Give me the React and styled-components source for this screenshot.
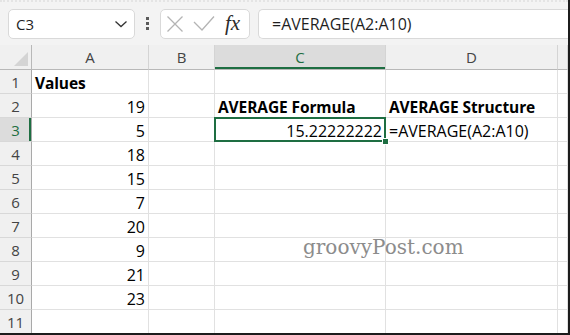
import React from "react";
import styled, { createGlobalStyle, css } from "styled-components";

const GREEN = "#1e6e42";

const GlobalStyle = createGlobalStyle`
  body {
    margin: 0;
    background: #fff;
    font-family: "Open Sans", "Liberation Sans", sans-serif;
  }
`;

const Frame = styled.div`
  position: relative;
  width: 570px;
  height: 335px;
  box-sizing: border-box;
  border-right: 2px solid #1c1c1c;
  border-bottom: 2px solid #1c1c1c;
  overflow: hidden;
  background: #fff;
`;

const Toolbar = styled.div`
  display: flex;
  align-items: center;
  height: 45px;
  box-sizing: border-box;
  padding: 0 0 0 8px;
  background: #f3f3f3;
  border-top: 2px dotted #e4e4e4;
`;

const NameBox = styled.div`
  display: flex;
  align-items: center;
  justify-content: space-between;
  width: 127px;
  height: 30px;
  box-sizing: border-box;
  padding: 0 6px 0 7px;
  background: #fff;
  border: 1px solid #d9d9d9;
  border-radius: 5px;
  font-size: 15px;
  color: #1f1f1f;
`;

const Dots = styled.div`
  display: flex;
  flex-direction: column;
  gap: 2px;
  margin: 0 11px 0 11px;
  span {
    width: 3px;
    height: 3px;
    background: #5a5a5a;
  }
`;

const FxGroup = styled.div`
  display: flex;
  align-items: center;
  width: 90px;
  height: 30px;
  box-sizing: border-box;
  padding: 0 0 0 5px;
  background: #fff;
  border: 1px solid #d9d9d9;
  border-radius: 5px;
  gap: 9px;
`;

const Fx = styled.span`
  font-family: "Liberation Serif", "DejaVu Serif", serif;
  font-style: italic;
  font-size: 21px;
  color: #2b2b2b;
  margin-left: 1px;
  line-height: 1;
`;

const FormulaInput = styled.div`
  flex: 1;
  height: 30px;
  box-sizing: border-box;
  margin-left: 8px;
  padding: 0 0 0 13px;
  display: flex;
  align-items: center;
  background: #fff;
  border: 1px solid #d9d9d9;
  border-right: none;
  border-radius: 5px 0 0 5px;
  font-size: 16px;
  color: #1f1f1f;
  white-space: nowrap;
`;

const Sheet = styled.div`
  display: grid;
  grid-template-columns: 32px 117px 66px 171px 172px 1fr;
  grid-template-rows: 25px;
  grid-auto-rows: 24px;
`;

const headerActive = css`
  background: #dcdcdc;
  color: ${GREEN};
`;

const Corner = styled.div`
  position: relative;
  background: #f0f0f0;
  border-right: 1px solid #b8b8b8;
  border-bottom: 1px solid #b8b8b8;
  &::after {
    content: "";
    position: absolute;
    right: 3px;
    bottom: 3px;
    border-style: solid;
    border-width: 0 0 14px 14px;
    border-color: transparent transparent #d4d4d4 transparent;
  }
`;

const ColHead = styled.div`
  display: flex;
  align-items: center;
  justify-content: center;
  background: #f0f0f0;
  border-right: 1px solid #d4d4d4;
  border-bottom: 1px solid #b8b8b8;
  font-size: 15px;
  color: #444;
  ${(p) =>
    p.$active &&
    css`
      ${headerActive};
      box-shadow: inset 0 -2px 0 ${GREEN};
    `}
`;

const RowHead = styled.div`
  display: flex;
  align-items: center;
  justify-content: center;
  background: #f0f0f0;
  border-right: 1px solid #a9a9a9;
  border-bottom: 1px solid #d8d8d8;
  font-size: 15px;
  color: #444;
  ${(p) =>
    p.$active &&
    css`
      ${headerActive};
      box-shadow: inset -2px 0 0 ${GREEN};
    `}
`;

const Cell = styled.div`
  position: relative;
  display: flex;
  align-items: flex-end;
  justify-content: ${(p) => (p.$num ? "flex-end" : "flex-start")};
  padding: 0 3px 0 3px;
  border-right: 1px solid #e1e1e1;
  border-bottom: 1px solid #e1e1e1;
  font-size: 16px;
  line-height: 20px;
  color: #000;
  white-space: nowrap;
  min-width: 0;
  ${(p) =>
    p.$bold &&
    css`
      font-weight: 700;
      font-size: 15.5px;
      letter-spacing: -0.1px;
    `}
  ${(p) =>
    p.$selected &&
    css`
      &::before {
        content: "";
        position: absolute;
        inset: -1px;
        border: 2px solid ${GREEN};
        z-index: 2;
      }
      &::after {
        content: "";
        position: absolute;
        right: -4px;
        bottom: -4px;
        width: 5px;
        height: 5px;
        background: ${GREEN};
        border: 1px solid #fff;
        z-index: 3;
      }
    `}
`;

const Watermark = styled.div`
  position: absolute;
  left: 303px;
  top: 237px;
  font-family: "DejaVu Serif", "Liberation Serif", serif;
  font-size: 20px;
  line-height: 20px;
  color: #8c8c8c;
  pointer-events: none;
`;

const cols = ["A", "B", "C", "D", "E"];

const data = {
  1: { A: { v: "Values", bold: true } },
  2: {
    A: { v: "19", num: true },
    C: { v: "AVERAGE Formula", bold: true },
    D: { v: "AVERAGE Structure", bold: true },
  },
  3: {
    A: { v: "5", num: true },
    C: { v: "15.22222222", num: true, selected: true },
    D: { v: "=AVERAGE(A2:A10)" },
  },
  4: { A: { v: "18", num: true } },
  5: { A: { v: "15", num: true } },
  6: { A: { v: "7", num: true } },
  7: { A: { v: "20", num: true } },
  8: { A: { v: "9", num: true } },
  9: { A: { v: "21", num: true } },
  10: { A: { v: "23", num: true } },
};

function Chevron() {
  return (
    <svg width="14" height="8" viewBox="0 0 14 8">
      <path d="M1.5 1.5 L7 6.5 L12.5 1.5" fill="none" stroke="#333" strokeWidth="1.3" />
    </svg>
  );
}

function Cross() {
  return (
    <svg width="18" height="18" viewBox="0 0 18 18">
      <path d="M1.5 1.5 L16.5 16.5 M16.5 1.5 L1.5 16.5" stroke="#b4b4b4" strokeWidth="1.3" />
    </svg>
  );
}

function Tick() {
  return (
    <svg width="22" height="17" viewBox="0 0 22 17">
      <path d="M1 7 L9 15 L21 1.5" fill="none" stroke="#b4b4b4" strokeWidth="1.3" />
    </svg>
  );
}

export default function App() {
  const rows = [];
  for (let r = 1; r <= 11; r++) {
    rows.push(
      <RowHead key={"h" + r} $active={r === 3}>
        {r}
      </RowHead>
    );
    cols.forEach((c) => {
      const cell = (data[r] && data[r][c]) || {};
      rows.push(
        <Cell
          key={c + r}
          $num={cell.num}
          $bold={cell.bold}
          $selected={cell.selected}
        >
          {cell.v}
        </Cell>
      );
    });
  }

  return (
    <Frame>
      <GlobalStyle />
      <Toolbar>
        <NameBox>
          C3
          <Chevron />
        </NameBox>
        <Dots>
          <span />
          <span />
          <span />
        </Dots>
        <FxGroup>
          <Cross />
          <Tick />
          <Fx>fx</Fx>
        </FxGroup>
        <FormulaInput>=AVERAGE(A2:A10)</FormulaInput>
      </Toolbar>
      <Sheet>
        <Corner />
        {cols.map((c) => (
          <ColHead key={c} $active={c === "C"}>
            {c === "E" ? "" : c}
          </ColHead>
        ))}
        {rows}
      </Sheet>
      <Watermark>groovyPost.com</Watermark>
    </Frame>
  );
}
